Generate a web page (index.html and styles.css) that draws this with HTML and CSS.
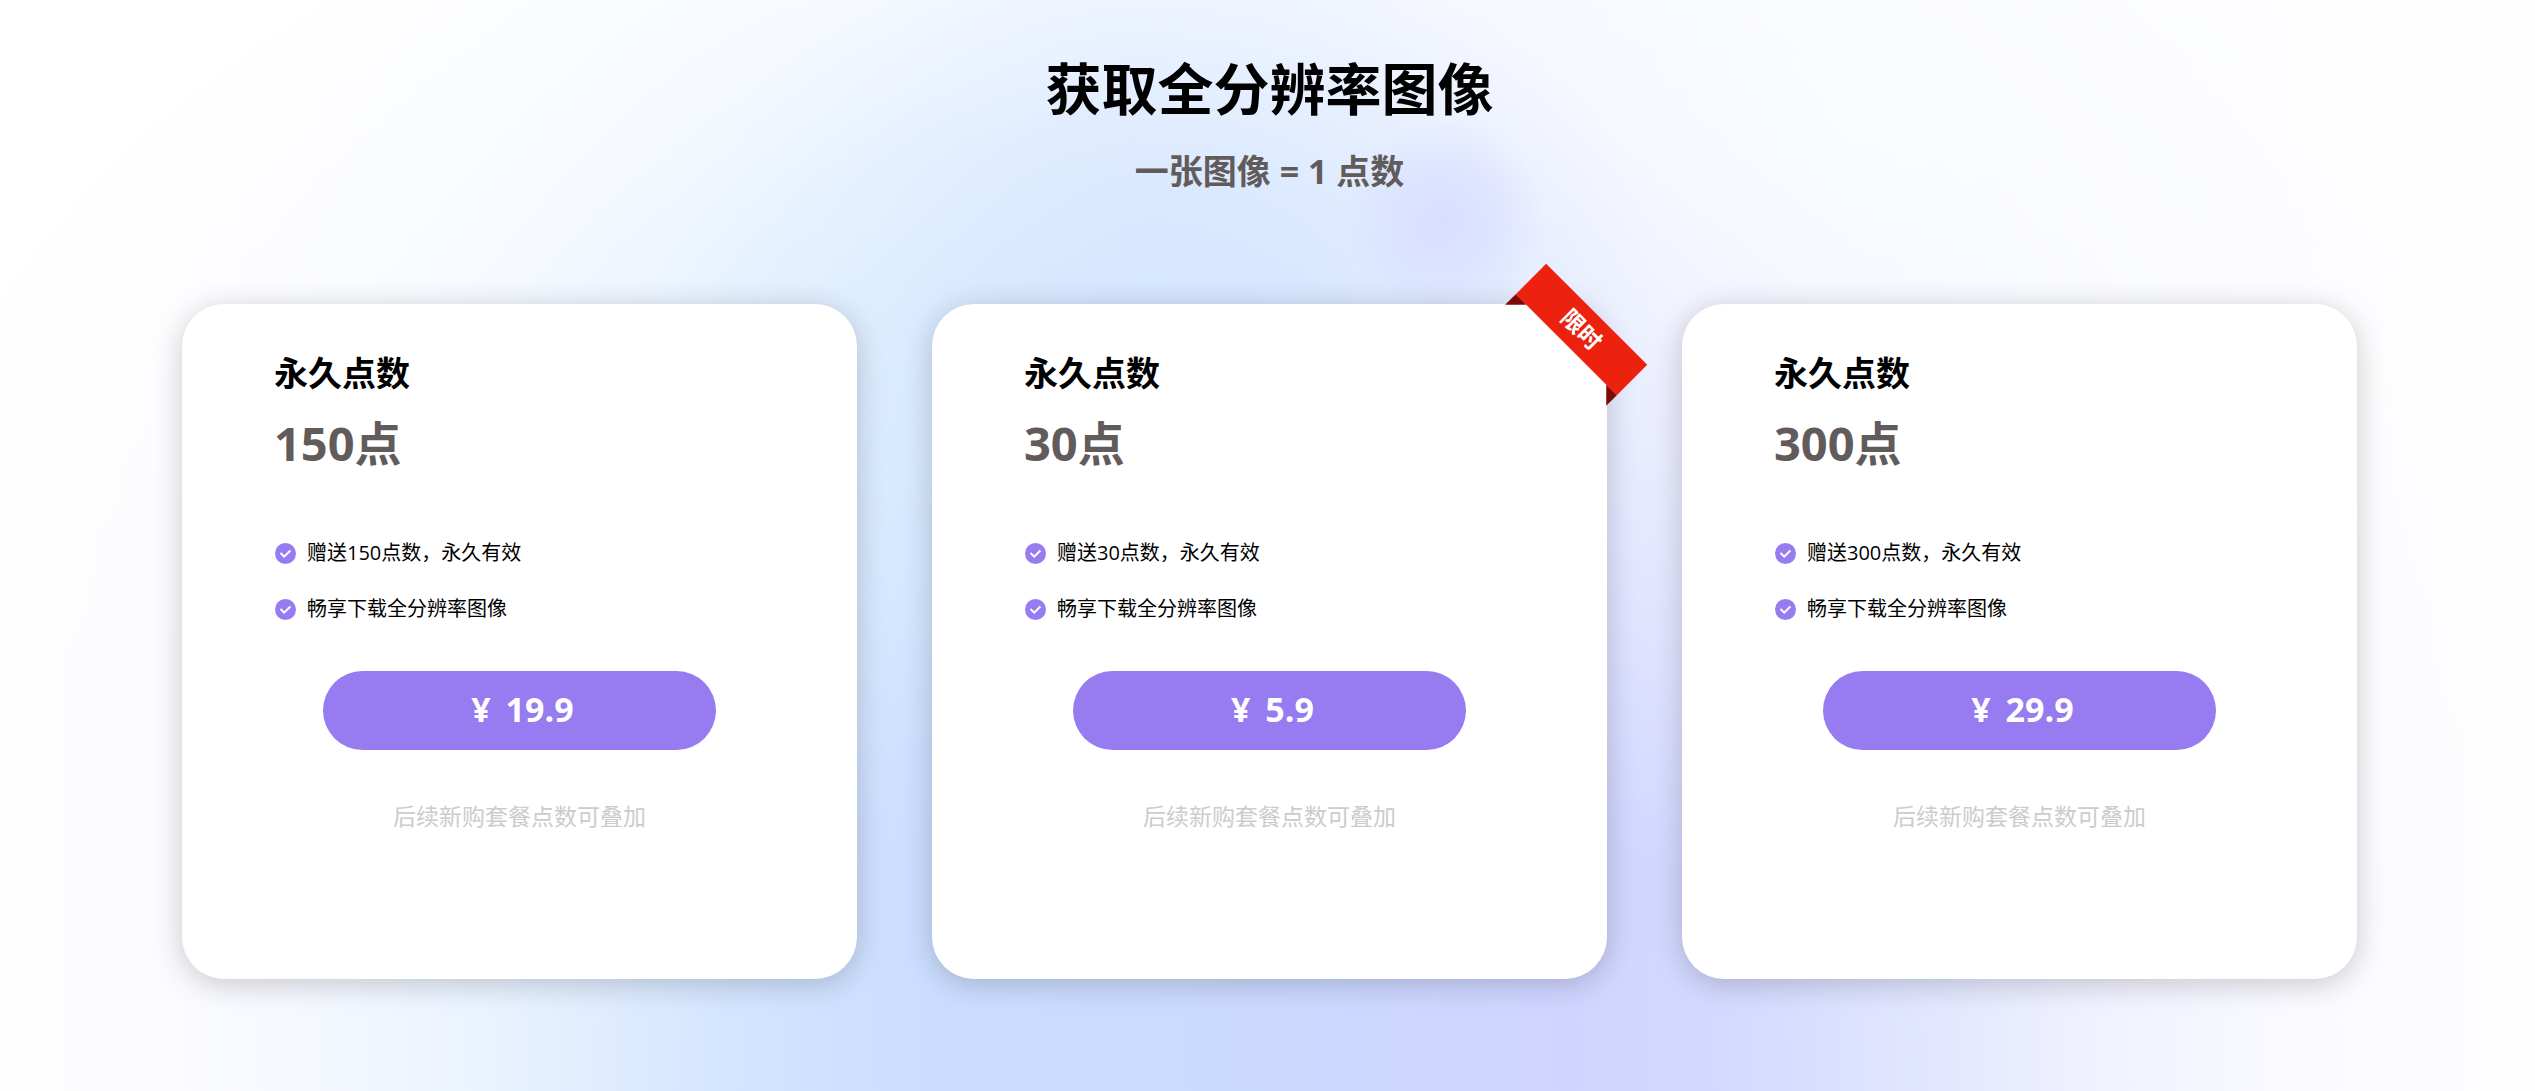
FILE: index.html
```
<!DOCTYPE html>
<html lang="zh-CN">
<head>
  <meta charset="UTF-8">
  <meta name="viewport" content="width=device-width, initial-scale=1.0">
  <title>获取全分辨率图像</title>
  <link rel="stylesheet" href="styles.css">
</head>
<body>
  <!-- 对勾图标 -->
  <svg class="sprite" aria-hidden="true">
    <symbol id="check" viewBox="0 0 21 21">
      <circle cx="10.500" cy="10.500" r="10.500" fill="#967bf1"/>
      <path d="M5.500 10l3.700 3.700 6.200-6.200" fill="none" stroke="#fff" stroke-width="2"/>
    </symbol>
  </svg>

  <main class="pricing">
    <header class="heading">
      <h1>获取全分辨率图像</h1>
      <p>一张图像 = 1 点数</p>
    </header>

    <div class="cards">
      <section class="card">
        <h2>永久点数</h2>
        <p class="points">150点</p>
        <ul class="features">
          <li><svg class="icon"><use href="#check"/></svg>赠送150点数，永久有效</li>
          <li><svg class="icon"><use href="#check"/></svg>畅享下载全分辨率图像</li>
        </ul>
        <button type="button" class="buy"><span class="currency">¥</span> 19.9</button>
        <p class="note">后续新购套餐点数可叠加</p>
      </section>

      <section class="card">
        <div class="ribbon">限时</div>
        <h2>永久点数</h2>
        <p class="points">30点</p>
        <ul class="features">
          <li><svg class="icon"><use href="#check"/></svg>赠送30点数，永久有效</li>
          <li><svg class="icon"><use href="#check"/></svg>畅享下载全分辨率图像</li>
        </ul>
        <button type="button" class="buy"><span class="currency">¥</span> 5.9</button>
        <p class="note">后续新购套餐点数可叠加</p>
      </section>

      <section class="card">
        <h2>永久点数</h2>
        <p class="points">300点</p>
        <ul class="features">
          <li><svg class="icon"><use href="#check"/></svg>赠送300点数，永久有效</li>
          <li><svg class="icon"><use href="#check"/></svg>畅享下载全分辨率图像</li>
        </ul>
        <button type="button" class="buy"><span class="currency">¥</span> 29.9</button>
        <p class="note">后续新购套餐点数可叠加</p>
      </section>
    </div>
  </main>
</body>
</html>
```
FILE: styles.css
```
* {
  box-sizing: border-box;
  margin: 0;
  padding: 0;
}

body {
  font-family: "Open Sans", "Noto Sans CJK SC", sans-serif;
  color: #000;
  background-color: #fff;
}

.sprite {
  display: none;
}

.pricing {
  min-height: 100vh;
  padding: 48px 178px 112px 182px;
  background:
    radial-gradient(circle at 57% 20%, rgba(214, 218, 255, 0.75) 0, rgba(214, 218, 255, 0.5) 50px, rgba(214, 218, 255, 0) 100px),
    radial-gradient(ellipse 20% 38% at 46% 30%, rgba(212, 231, 255, 0.9), rgba(212, 231, 255, 0)),
    radial-gradient(ellipse 30% 75% at 74% 8%, rgba(251, 252, 255, 0.9), rgba(251, 252, 255, 0)),
    radial-gradient(ellipse 58% 110% at 49% 100%, rgba(255, 255, 255, 0) 35%, rgba(253, 253, 255, 0.3) 66%, rgba(253, 253, 255, 0.75) 87%, #fff 112%),
    radial-gradient(ellipse 12% 50% at 34% 30%, rgba(215, 242, 255, 0.6), rgba(215, 242, 255, 0)),
    linear-gradient(90deg, #fffffd 0, #fafaff 6%, #f4f7ff 11%, #e6f1ff 19%, #d3e5ff 29%, #cbddff 37%, #cbd9ff 50%, #d0d5ff 62%, #d4d9ff 68%, #e0e5ff 77%, #eff0ff 84%, #f9f8ff 92%, #fffffe 100%);
}

.heading {
  text-align: center;
  font-weight: bold;
}

.heading h1 {
  font-size: 56px;
  line-height: 80px;
}

.heading p {
  margin-top: 18px;
  font-size: 34px;
  line-height: 50px;
  color: #615b5b;
}

.cards {
  display: grid;
  grid-template-columns: repeat(3, 1fr);
  gap: 75px;
  margin-top: 108px;
}

.card {
  position: relative;
  aspect-ratio: 1;
  padding: 44px 92px;
  border-radius: 42px;
  background-color: #fff;
  box-shadow: 0 5px 30px rgba(0, 0, 0, 0.2);
}

.card h2 {
  font-size: 34px;
  line-height: 50px;
}

.points {
  margin-top: 10px;
  font-size: 47px;
  line-height: 70px;
  font-weight: bold;
  color: #615b5b;
}

.features {
  margin-top: 60px;
  list-style: none;
}

.features li {
  display: flex;
  align-items: center;
  gap: 11px;
  margin-bottom: 26px;
  padding-left: 1px;
  font-size: 20px;
  line-height: 30px;
}

.icon {
  width: 21px;
  height: 21px;
}

.buy {
  display: block;
  width: 80%;
  height: 79px;
  margin: 47px auto 0;
  padding: 0 0 3px 6px;
  border: none;
  border-radius: 40px;
  background-color: #967bf1;
  color: #fff;
  font-family: inherit;
  font-size: 34px;
  font-weight: bold;
  cursor: pointer;
}

.currency {
  margin-right: 6px;
}

.note {
  margin-top: 49px;
  font-size: 23px;
  line-height: 34px;
  text-align: center;
  color: #ccc;
}

/* 右上角斜丝带 */
.ribbon {
  position: absolute;
  top: 4px;
  right: -46px;
  width: 143px;
  height: 43px;
  background-color: #ec220f;
  color: #fff;
  font-size: 23px;
  font-weight: bold;
  line-height: 43px;
  text-align: center;
  transform: rotate(45deg);
}

/* 丝带折角 */
.ribbon::before,
.ribbon::after {
  content: "";
  position: absolute;
  top: 100%;
  border-top: 15px solid #7d0a05;
}

.ribbon::before {
  left: 0;
  border-right: 15px solid transparent;
}

.ribbon::after {
  right: 0;
  border-left: 15px solid transparent;
}
```
